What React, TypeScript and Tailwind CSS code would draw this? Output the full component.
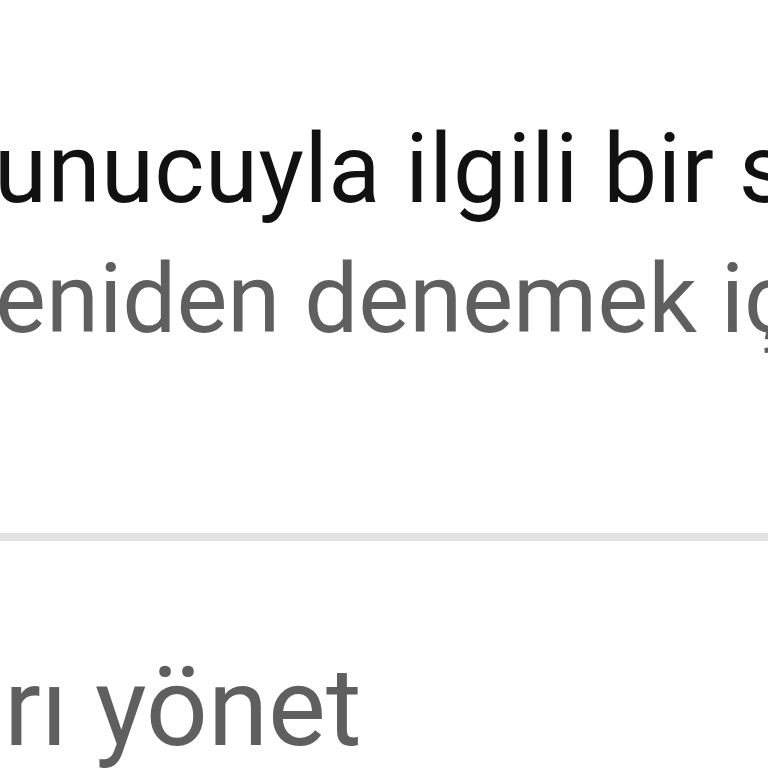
export default function App() {
  return (
    <div
      className="w-[768px] h-[768px] overflow-hidden bg-white flex flex-col whitespace-nowrap"
      style={{ fontFamily: 'Roboto, "Noto Sans", sans-serif' }}
    >
      {/* dialog body: title + hint */}
      <div className="shrink-0 pt-[113px] flex flex-col gap-[18px]">
        <p className="text-[96px] leading-[112px] tracking-[0.5px] text-[#111111] ml-[-6px]">
          unucuyla ilgili bir sorun oluştu
        </p>
        <p className="text-[96px] leading-[112px] text-[#5f5f5f] ml-[-5px]">
          eniden denemek için dokunun
        </p>
      </div>

      <div className="shrink-0 mt-[178px] h-[8px] w-full bg-[#e2e2e2]" />

      {/* menu row */}
      <div className="shrink-0 mt-[103px]">
        <p className="text-[109px] leading-[128px] text-[#5f5f5f] ml-[4px]">
          rı yönet
        </p>
      </div>
    </div>
  );
}
